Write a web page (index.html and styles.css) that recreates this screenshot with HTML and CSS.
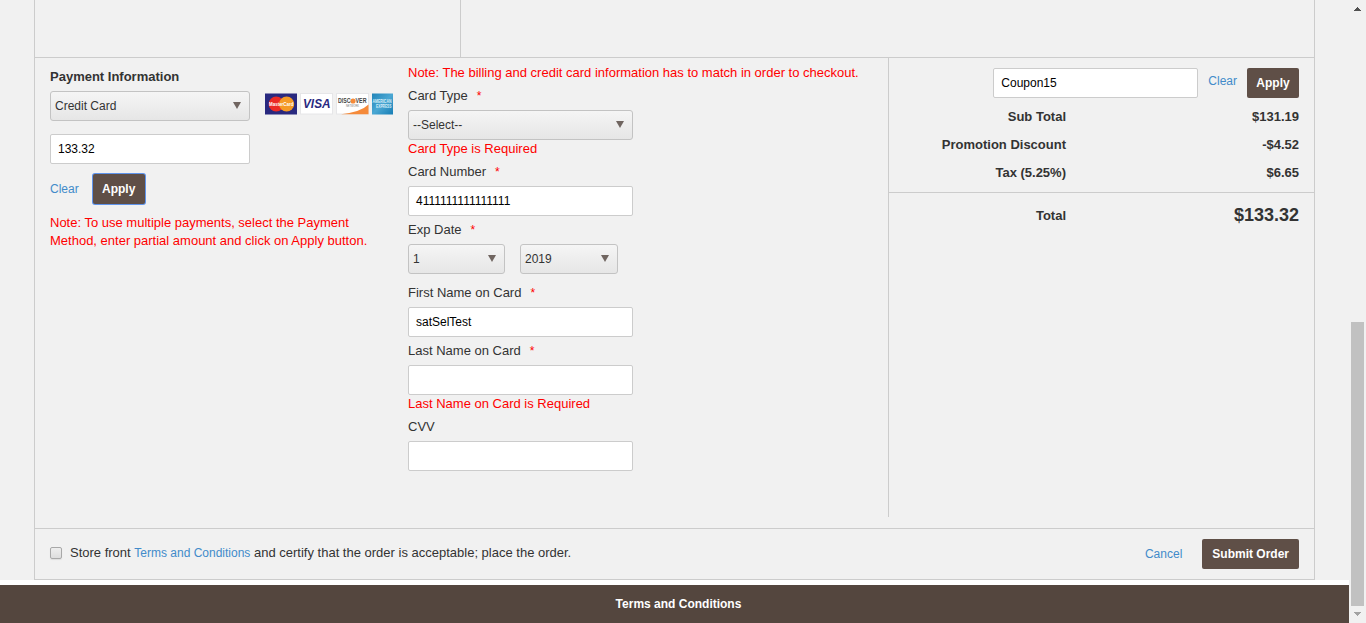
FILE: index.html
```
<!DOCTYPE html>
<html lang="en">
<head>
<meta charset="utf-8">
<title>Checkout</title>
<link rel="stylesheet" href="styles.css">
</head>
<body>
<div class="page">
  <main class="content">
    <div class="checkout">
      <div class="upper"><div class="upper-left"></div></div>
      <div class="columns">
        <section class="payment">
          <h4 class="heading">Payment Information</h4>
          <div class="method">
            <div class="select method-select"><span>Credit Card</span><i class="arrow"></i></div>
            <svg class="cards" width="128" height="22" viewBox="0 0 128 22">
              <rect x="0" y="0.5" width="32" height="21" fill="#29297f"/>
              <circle cx="11.2" cy="11" r="7.6" fill="#eb2a25"/>
              <circle cx="21.6" cy="11" r="7.6" fill="#f59a25"/>
              <text x="4" y="13.3" textLength="24.5" lengthAdjust="spacingAndGlyphs" font-size="5.8" font-weight="bold" fill="#fff">MasterCard</text>
              <rect x="35.5" y="0.5" width="32" height="20.5" fill="#fff" stroke="#e6e6e8"/>
              <text x="38" y="15.2" textLength="27.5" lengthAdjust="spacingAndGlyphs" font-size="13" font-weight="bold" font-style="italic" fill="#29297f">VISA</text>
              <rect x="71.5" y="0.5" width="32" height="20.5" fill="#fff" stroke="#e6e6e8"/>
              <path d="M76 21.2Q96 19 103.5 11.5V21.2Z" fill="#f58a3a"/>
              <circle cx="88" cy="8" r="2.6" fill="#f58a3a"/>
              <text x="73" y="10.2" textLength="12.5" lengthAdjust="spacingAndGlyphs" font-size="6.4" font-weight="bold" fill="#444">DISC</text>
              <text x="90.5" y="10.2" textLength="11" lengthAdjust="spacingAndGlyphs" font-size="6.4" font-weight="bold" fill="#444">VER</text>
              <text x="81" y="13.7" textLength="13" lengthAdjust="spacingAndGlyphs" font-size="3" fill="#777">NETWORK</text>
              <defs><linearGradient id="amex" x1="0" y1="0" x2="1" y2="1"><stop offset="0" stop-color="#2184b8"/><stop offset=".5" stop-color="#4aa7d3"/><stop offset="1" stop-color="#167db5"/></linearGradient></defs>
              <rect x="107" y="0.5" width="21" height="21" fill="url(#amex)"/>
              <text x="107.5" y="10.3" textLength="19" lengthAdjust="spacingAndGlyphs" font-size="5" font-weight="bold" fill="#d8eef8">AMERICAN</text>
              <text x="111" y="15.3" textLength="15.5" lengthAdjust="spacingAndGlyphs" font-size="5" font-weight="bold" fill="#d8eef8">EXPRESS</text>
            </svg>
          </div>
          <div class="input amount">133.32</div>
          <div class="actions"><a class="link">Clear</a><button class="btn focused">Apply</button></div>
          <p class="note">Note: To use multiple payments, select the Payment<br>Method, enter partial amount and click on Apply button.</p>
        </section>
        <section class="card-form">
          <p class="note match-note">Note: The billing and credit card information has to match in order to checkout.</p>
          <div class="label">Card Type<b class="req">*</b></div>
          <div class="select"><span>--Select--</span><i class="arrow"></i></div>
          <div class="error">Card Type is Required</div>
          <div class="label">Card Number<b class="req">*</b></div>
          <div class="input">4111111111111111</div>
          <div class="label spaced">Exp Date<b class="req">*</b></div>
          <div class="expiry">
            <div class="select month"><span>1</span><i class="arrow"></i></div>
            <div class="select year"><span>2019</span><i class="arrow"></i></div>
          </div>
          <div class="label after-expiry">First Name on Card<b class="req">*</b></div>
          <div class="input">satSelTest</div>
          <div class="label spaced">Last Name on Card<b class="req">*</b></div>
          <div class="input"></div>
          <div class="error">Last Name on Card is Required</div>
          <div class="label">CVV</div>
          <div class="input"></div>
        </section>
        <section class="summary">
          <div class="coupon">
            <div class="input coupon-input">Coupon15</div>
            <a class="link coupon-clear">Clear</a>
            <button class="btn coupon-apply">Apply</button>
          </div>
          <div class="row"><span class="row-label">Sub Total</span><span>$131.19</span></div>
          <div class="row"><span class="row-label">Promotion Discount</span><span>-$4.52</span></div>
          <div class="row"><span class="row-label">Tax (5.25%)</span><span>$6.65</span></div>
          <div class="row total"><span class="row-label">Total</span><span class="grand">$133.32</span></div>
        </section>
      </div>
      <div class="confirm">
        <span class="checkbox"></span>
        <span class="terms">Store front <a class="link">Terms and Conditions</a> and certify that the order is acceptable; place the order.</span>
        <a class="link cancel">Cancel</a>
        <button class="btn submit">Submit Order</button>
      </div>
    </div>
    <footer class="footer">Terms and Conditions</footer>
  </main>
  <div class="scrollbar">
    <svg width="17" height="17" viewBox="0 0 17 17"><path d="M5 11h7v-1h-1V9h-1V8H9V7H8v1H7v1H6v1H5z" fill="#505050"/></svg>
    <div class="thumb"></div>
    <svg width="17" height="17" viewBox="0 0 17 17"><path d="M5 6h7v1h-1v1h-1v1H9v1H8V9H7V8H6V7H5z" fill="#a3a3a3"/></svg>
  </div>
</div>
</body>
</html>
```
FILE: styles.css
```
* { box-sizing: border-box; }
body {
  margin: 0;
  overflow: hidden;
  background: #fff;
  color: #333;
  font: 13px/18px "Liberation Sans", Arial, sans-serif;
}
h4, p { margin: 0; }
.page { display: flex; width: 1366px; height: 623px; }
.content {
  display: flex;
  flex-direction: column;
  width: 1349px;
  background: linear-gradient(#f1f1f1 580px, #fff 580px);
}
.checkout {
  width: 1281px;
  height: 580px;
  margin: 0 34px 5px;
  border: 1px solid #ccc;
  border-top: 0;
}
.upper { height: 58px; border-bottom: 1px solid #ccc; }
.upper-left { width: 426px; height: 57px; border-right: 1px solid #ccc; }
.columns { display: flex; height: 470px; }

.heading { font-size: 13px; line-height: 18px; }
.note, .error { color: #f00; }
.link { color: #428bca; font-size: 12px; }

.input, .select {
  height: 30px;
  border: 1px solid #ccc;
  border-radius: 2px;
  font-size: 12px;
  line-height: 28px;
}
.input { padding: 0 7px; background: #fff; color: #000; }
.select {
  display: flex;
  justify-content: space-between;
  align-items: center;
  padding: 0 8px 0 4px;
  border-color: #c3c3c3;
  border-radius: 3px;
  background: linear-gradient(#f5f5f5, #e6e6e6);
}
.arrow {
  margin-bottom: 1px;
  border: 4px solid transparent;
  border-top: 7px solid #706560;
  border-bottom: 0;
}
.btn {
  height: 30px;
  padding: 0 10px;
  border: 0;
  border-radius: 2px;
  background: #5f4f47;
  color: #fff;
  font: bold 12px/30px "Liberation Sans", Arial, sans-serif;
}
.focused { width: 52px; padding: 0 9px; box-shadow: 0 0 0 1px #5f94ec; }

.payment { width: 358px; padding: 10px 0 0 15px; }
.method { display: flex; gap: 15px; margin-top: 5px; }
.method-select { width: 200px; }
.cards { margin-top: 2px; font-family: "Liberation Sans", Arial, sans-serif; }
.amount { width: 200px; margin-top: 13px; }
.actions { display: flex; align-items: center; gap: 14px; margin: 10px 0; }

.card-form { width: 495px; padding: 6px 0 0 15px; }
.match-note { margin-bottom: 5px; }
.card-form .input, .card-form > .select { width: 225px; }
.label { margin-bottom: 5px; }
.spaced { margin-top: 5px; }
.after-expiry { margin-top: 10px; }
.req { margin-left: 9px; color: #f00; font-weight: normal; font-size: 12px; }
.error { height: 17px; margin-bottom: 6px; line-height: 17px; }
.expiry { display: flex; gap: 15px; }
.month { width: 97px; }
.year { width: 98px; }

.summary { flex: 1; height: 459px; border-left: 1px solid #ccc; font-weight: bold; }
.coupon { display: flex; justify-content: flex-end; padding: 10px 15px 5px 0; font-weight: normal; }
.coupon-input { width: 205px; margin-right: 10px; }
.coupon-clear { margin: 4px 10px 0 0; }
.coupon-apply { width: 52px; padding: 0 9px; }
.row { display: flex; justify-content: space-between; height: 28px; padding-right: 15px; line-height: 28px; }
.row-label { width: 177px; text-align: right; }
.total { height: 46px; margin-top: 5px; border-top: 1px solid #ccc; line-height: 45px; }
.grand { font-size: 18px; }

.confirm { display: flex; align-items: center; height: 51px; padding: 0 15px; border-top: 1px solid #ccc; }
.checkbox {
  width: 12px;
  height: 12px;
  margin: 0 8px 2px 0;
  border: 1px solid #a8a8a8;
  border-radius: 2px;
  background: linear-gradient(#eee, #ddd);
  box-shadow: 0 1px 1px #ddd;
}
.terms { flex: 1; margin-bottom: 2px; }
.cancel { margin-right: 20px; }

.footer {
  flex: 1;
  background: #54463e;
  color: #fff;
  font-size: 12px;
  font-weight: bold;
  line-height: 38px;
  text-align: center;
  padding-left: 8px;
}
.scrollbar { display: flex; flex-direction: column; width: 17px; background: #f1f1f1; }
.scrollbar svg { display: block; }
.thumb { width: 13px; height: 284px; margin: auto 2px 0; background: #c1c1c1; }
```
